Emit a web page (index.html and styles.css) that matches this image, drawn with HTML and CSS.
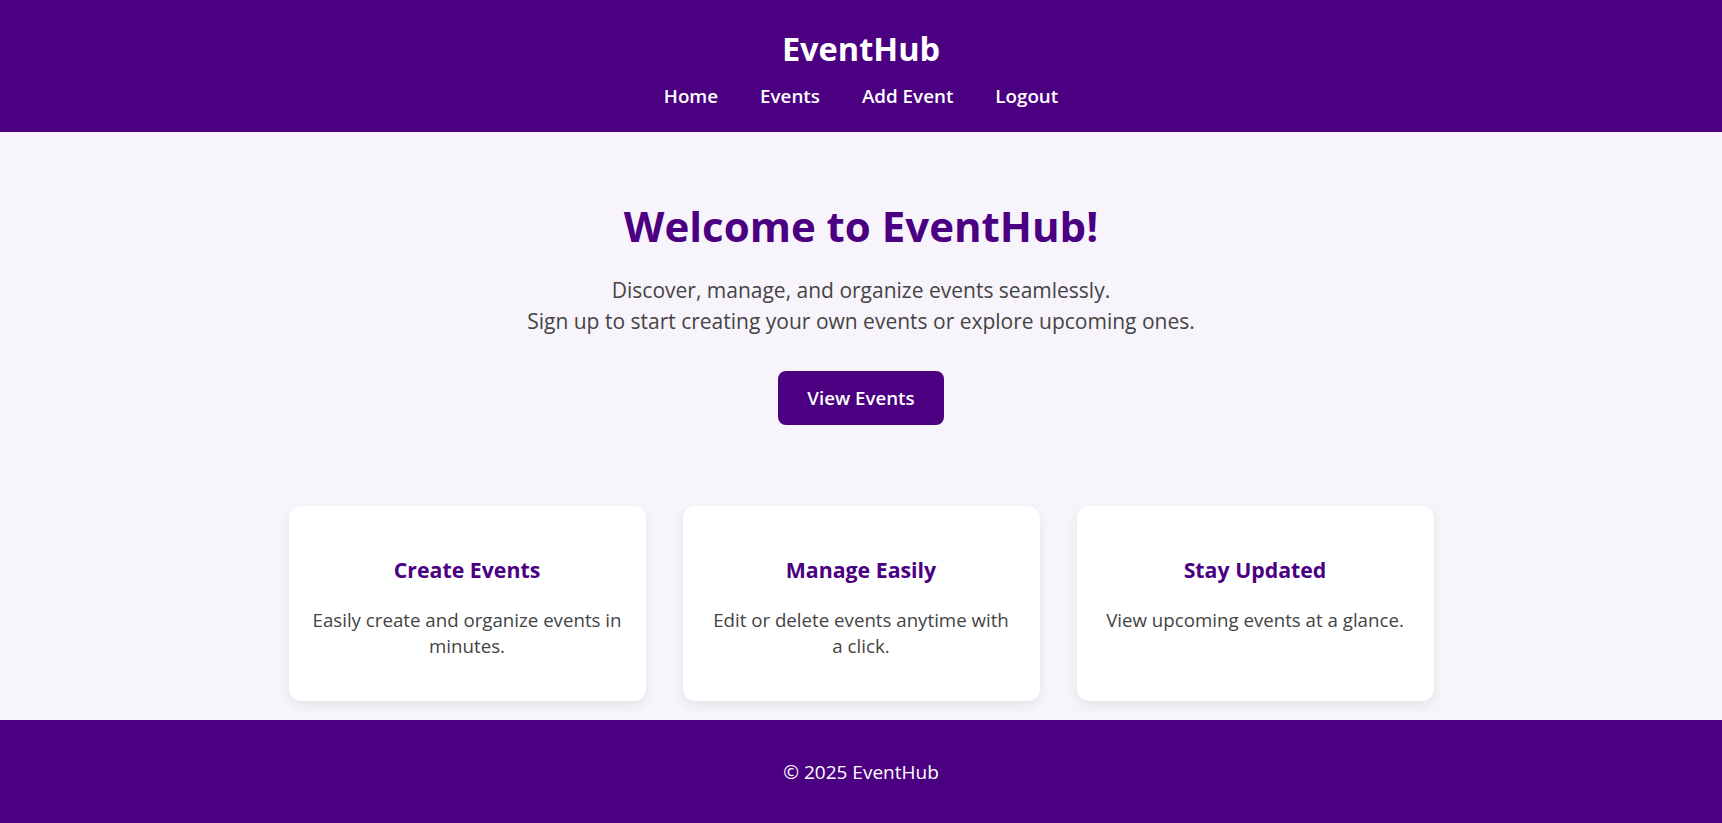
FILE: index.html
```html
<!DOCTYPE html>
<html lang="en">
<head>
<meta charset="utf-8">
<title>EventHub</title>
<link rel="stylesheet" href="styles.css">
</head>
<body>
<header class="site-header">
  <h1 class="brand">EventHub</h1>
  <nav class="nav">
    <a href="#" class="nav-link">Home</a>
    <a href="#" class="nav-link">Events</a>
    <a href="#" class="nav-link">Add Event</a>
    <a href="#" class="nav-link">Logout</a>
  </nav>
</header>
<main class="main">
  <section class="hero">
    <h2 class="hero-title">Welcome to EventHub!</h2>
    <p class="hero-text">Discover, manage, and organize events seamlessly.<br>Sign up to start creating your own events or explore upcoming ones.</p>
    <a href="#" class="btn">View Events</a>
  </section>
  <section class="features">
    <div class="card">
      <h3 class="card-title">Create Events</h3>
      <p class="card-text">Easily create and organize events in minutes.</p>
    </div>
    <div class="card">
      <h3 class="card-title">Manage Easily</h3>
      <p class="card-text">Edit or delete events anytime with a click.</p>
    </div>
    <div class="card">
      <h3 class="card-title">Stay Updated</h3>
      <p class="card-text">View upcoming events at a glance.</p>
    </div>
  </section>
</main>
<footer class="site-footer">
  <p class="footer-text">© 2025 EventHub</p>
</footer>
</body>
</html>
```
FILE: styles.css
```css
* { box-sizing: border-box; }
html, body { margin: 0; padding: 0; }
body {
  font-family: "Open Sans", "Noto Sans", sans-serif;
  background: #f8f4fc;
  color: #333;
}
.site-header {
  background: #4b0082;
  color: #fff;
  text-align: center;
  padding: 30px 20px 24px;
}
.brand {
  margin: 0;
  font-size: 32.5px;
  line-height: 38px;
  font-weight: 700;
}
.nav {
  margin-top: 16px;
  display: flex;
  justify-content: center;
  gap: 42px;
}
.nav-link {
  color: #fff;
  text-decoration: none;
  font-weight: 600;
  font-size: 18.8px;
  line-height: 24px;
}
.main {
  padding-top: 70px;
}
.hero {
  text-align: center;
}
.hero-title {
  margin: 0;
  color: #4b0082;
  font-size: 42px;
  line-height: 48px;
  font-weight: 700;
}
.hero-text {
  margin: 25px 0 34px;
  font-size: 21px;
  line-height: 31px;
  color: #444;
}
.btn {
  display: inline-block;
  background: #4b0082;
  color: #fff;
  text-decoration: none;
  font-weight: 600;
  font-size: 18.7px;
  line-height: 24px;
  padding: 15px 29px;
  border-radius: 8px;
}
.features {
  display: flex;
  justify-content: center;
  gap: 37px;
  margin-top: 81px;
  padding-bottom: 19px;
}
.card {
  width: 357px;
  background: #fff;
  border-radius: 12px;
  box-shadow: 0 4px 12px rgba(0, 0, 0, 0.08);
  padding: 49px 24px 42px;
  text-align: center;
}
.card-title {
  margin: 0;
  color: #4b0082;
  font-size: 21.3px;
  line-height: 29px;
  font-weight: 700;
}
.card-text {
  margin: 23px 0 0;
  font-size: 18.7px;
  line-height: 26px;
  color: #444;
}
.site-footer {
  background: #4b0082;
  color: #fff;
  text-align: center;
  padding: 40px 20px 39px;
}
.footer-text {
  margin: 0;
  font-size: 19px;
  line-height: 24px;
}
```
